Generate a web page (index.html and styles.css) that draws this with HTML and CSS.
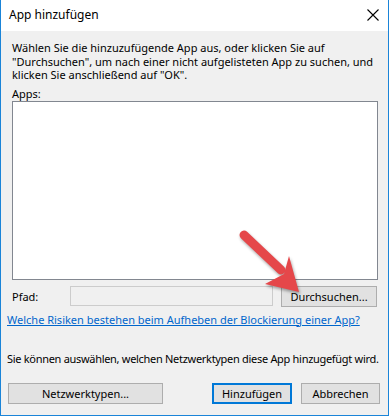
FILE: index.html
```html
<!DOCTYPE html>
<html lang="de">
<head>
<meta charset="utf-8">
<title>App hinzufügen</title>
<link rel="stylesheet" href="styles.css">
</head>
<body>
<div class="window">
  <div class="titlebar">
    <span class="title">App hinzufügen</span>
    <svg class="close" width="12" height="12" viewBox="0 0 12 12"><path d="M0.5 0.5L11.5 11.5M11.5 0.5L0.5 11.5" stroke="#000" stroke-width="1.1" fill="none"/></svg>
  </div>
  <div class="content">
    <p class="intro">Wählen Sie die hinzuzufügende App aus, oder klicken Sie auf<br>"Durchsuchen", um nach einer nicht aufgelisteten App zu suchen, und<br>klicken Sie anschließend auf "OK".</p>
    <div class="label">Apps:</div>
    <div class="listbox"></div>
    <div class="pathrow">
      <span class="pathlabel">Pfad:</span>
      <div class="pathinput"></div>
      <button class="btn browse">Durchsuchen...</button>
    </div>
    <a class="link" href="#">Welche Risiken bestehen beim Aufheben der Blockierung einer App?</a>
    <p class="note">Sie können auswählen, welchen Netzwerktypen diese App hinzugefügt wird.</p>
    <div class="buttons">
      <button class="btn nettypes">Netzwerktypen...</button>
      <div class="right">
        <button class="btn primary">Hinzufügen</button>
        <button class="btn cancel">Abbrechen</button>
      </div>
    </div>
  </div>
  <svg class="arrow" width="80" height="80" viewBox="0 0 80 80">
    <line x1="5" y1="5" x2="42" y2="40" stroke="#e5474a" stroke-width="9" stroke-linecap="round"/>
    <polygon points="60,62 26,54 45,44 50,26" fill="#e5474a"/>
  </svg>
</div>
</body>
</html>
```
FILE: styles.css
```css
* { box-sizing: border-box; }
html, body { margin: 0; padding: 0; }
body {
  font-family: "Noto Sans", "Open Sans", sans-serif;
  font-size: 11px;
  color: #000;
  background: #fff;
}
.window {
  position: relative;
  width: 389px;
  height: 416px;
  border: 1px solid #1a84d8;
  border-top: none;
  background: #f0f0f0;
  display: flex;
  flex-direction: column;
}
.titlebar {
  height: 31px;
  background: #fff;
  display: flex;
  align-items: center;
  justify-content: space-between;
  padding: 0 9px 0 8px;
}
.title { font-size: 12px; margin-top: -2px; }
.close { margin-top: -2px; }
.content {
  padding: 0 7px 0 6px;
  display: flex;
  flex-direction: column;
}
.intro {
  margin: 10px 0 0 5px;
  line-height: 13.5px;
  white-space: nowrap;
}
.label {
  margin: 5px 0 0 5px;
  line-height: 14px;
}
.listbox {
  margin: 0 3px 0 5px;
  height: 179px;
  background: #fff;
  border: 1px solid #828790;
}
.pathrow {
  display: flex;
  align-items: center;
  margin-top: 6px;
  height: 21px;
}
.pathlabel {
  width: 63px;
  padding-left: 5px;
}
.pathinput {
  width: 203px;
  height: 20px;
  border: 1px solid #cccccc;
  background: #f0f0f0;
}
.btn {
  font-family: inherit;
  font-size: 11px;
  background: #e1e1e1;
  border: 1px solid #adadad;
  color: #000;
  padding: 0;
  height: 21px;
}
.browse {
  margin-left: 8px;
  width: 96px;
}
.link {
  margin: 6px 0 0 0;
  color: #0066cc;
  line-height: 14px;
  text-decoration: underline;
  align-self: flex-start;
  white-space: nowrap;
}
.note {
  margin: 25px 0 0 0;
  line-height: 14px;
  white-space: nowrap;
  letter-spacing: -0.3px;
}
.buttons {
  display: flex;
  justify-content: space-between;
  margin-top: 17px;
  padding-left: 1px;
  padding-right: 1px;
}
.right { display: flex; gap: 9px; }
.nettypes { width: 155px; }
.primary {
  width: 80px;
  border: 2px solid #0078d7;
}
.cancel { width: 79px; }
.arrow {
  position: absolute;
  left: 238px;
  top: 230px;
  overflow: visible;
  filter: drop-shadow(1px 2px 1.5px rgba(0,0,0,0.35));
}
```
